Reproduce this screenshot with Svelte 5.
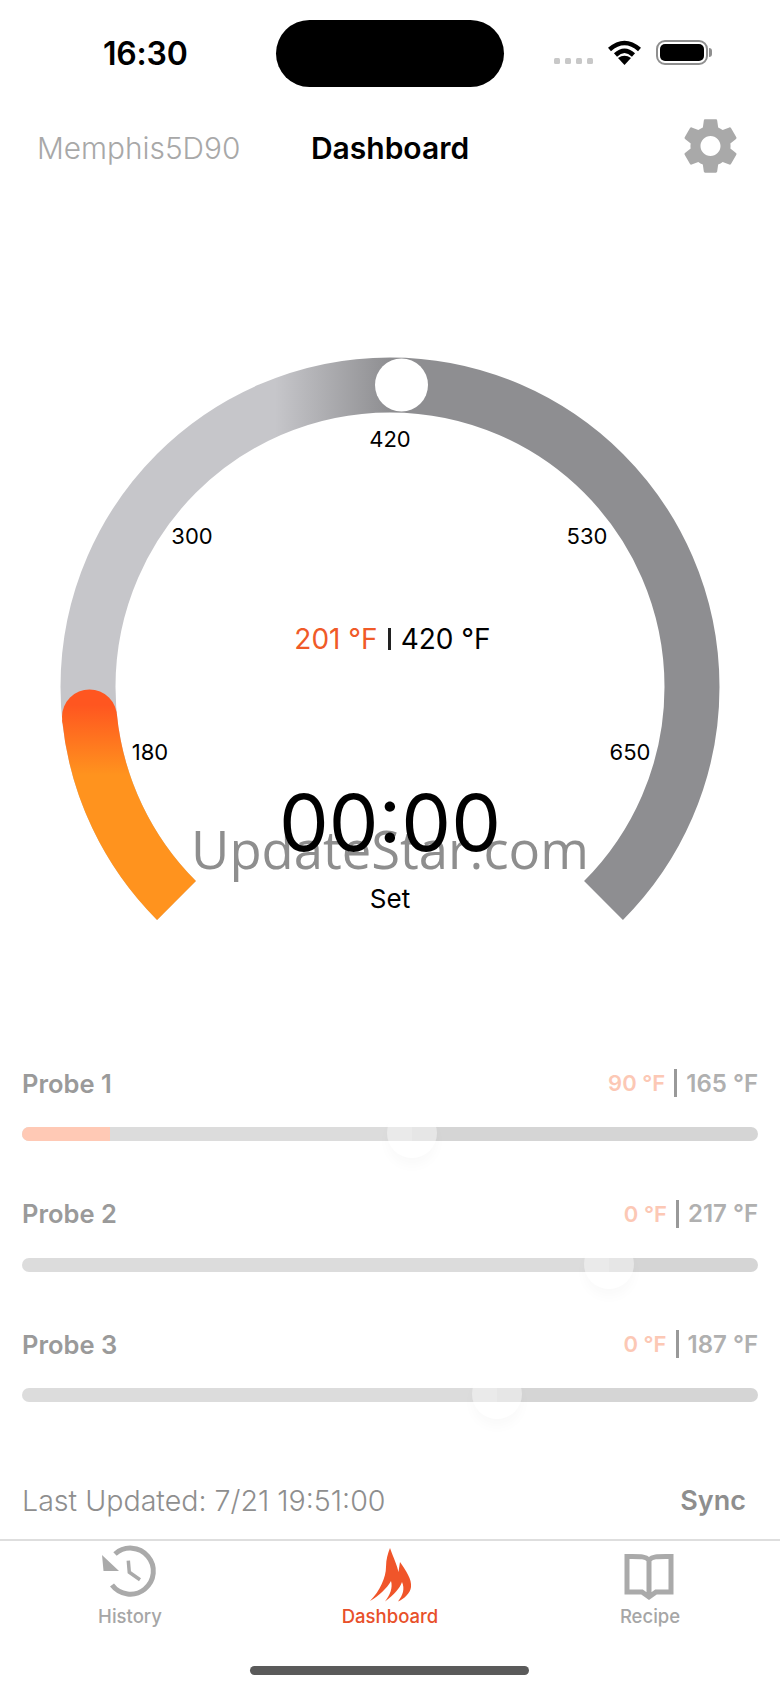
<script>
  const marks = [
    { label: "180", x: 150, y: 412 },
    { label: "300", x: 192, y: 196 },
    { label: "420", x: 390, y: 99 },
    { label: "530", x: 587, y: 196 },
    { label: "650", x: 630, y: 412 }
  ];

  const probes = [
    { name: "Probe 1", temp: 90, target: 165, fill: 12, thumb: 53 },
    { name: "Probe 2", temp: 0, target: 217, fill: 0, thumb: 79.7 },
    { name: "Probe 3", temp: 0, target: 187, fill: 0, thumb: 64.5 }
  ];
</script>

<div class="phone">
  <div class="status">
    <span class="clock">16:30</span>
    <div class="island"></div>
    <div class="indicators">
      <div class="signal"><i></i><i></i><i></i><i></i></div>
      <svg class="wifi" viewBox="0 0 35 25" width="35" height="25">
        <path d="M2.5 9.5Q17.5-3.5 32.5 9.5M8.5 15Q17.5 6.5 26.5 15" fill="none" stroke="#000" stroke-width="4.5" />
        <path d="M11 18Q17.5 13.5 24 18L17.5 25Z" fill="#000" />
      </svg>
      <div class="battery"><div class="charge"></div></div>
      <div class="battery-cap"></div>
    </div>
  </div>

  <div class="nav">
    <span class="device">Memphis5D90</span>
    <span class="title">Dashboard</span>
    <svg class="gear" viewBox="2.5 2.3 19 19.4" width="53" height="54">
      <path fill="#a9a9a9" d="M19.14 12.94c.04-.3.06-.61.06-.94 0-.32-.02-.64-.07-.94l2.03-1.58c.18-.14.23-.41.12-.61l-1.92-3.32c-.12-.22-.37-.29-.59-.22l-2.39.96c-.5-.38-1.03-.7-1.62-.94l-.36-2.54c-.04-.24-.24-.41-.48-.41h-3.84c-.24 0-.43.17-.47.41l-.36 2.54c-.59.24-1.13.57-1.62.94l-2.39-.96c-.22-.08-.47 0-.59.22L2.74 8.87c-.12.21-.08.47.12.61l2.03 1.58c-.05.3-.09.63-.09.94s.02.64.07.94l-2.03 1.58c-.18.14-.23.41-.12.61l1.92 3.32c.12.22.37.29.59.22l2.39-.96c.5.38 1.03.7 1.62.94l.36 2.54c.05.24.24.41.48.41h3.84c.24 0 .44-.17.47-.41l.36-2.54c.59-.24 1.13-.56 1.62-.94l2.39.96c.22.08.47 0 .59-.22l1.92-3.32c.12-.22.07-.47-.12-.61l-2.01-1.58zM12 15.6c-1.98 0-3.6-1.62-3.6-3.6s1.62-3.6 3.6-3.6 3.6 1.62 3.6 3.6-1.62 3.6-3.6 3.6z" />
    </svg>
  </div>

  <div class="gauge">
    <svg class="dial" viewBox="0 0 780 600" width="780" height="600">
      <defs>
        <linearGradient id="track" gradientUnits="userSpaceOnUse" x1="275" y1="0" x2="390" y2="0">
          <stop offset="0" stop-color="#c6c6ca" />
          <stop offset="1" stop-color="#8e8e91" />
        </linearGradient>
        <linearGradient id="heat" gradientUnits="userSpaceOnUse" x1="0" y1="365" x2="0" y2="435">
          <stop offset="0" stop-color="#ff5620" />
          <stop offset="1" stop-color="#ff931e" />
        </linearGradient>
      </defs>
      <path d="M176.5 560.5A302 302 0 1 1 603.5 560.5" fill="none" stroke="url(#track)" stroke-width="55" />
      <path d="M176.5 560.5A302 302 0 0 1 89.5 377" fill="none" stroke="url(#heat)" stroke-width="55" />
      <circle cx="89.5" cy="377" r="27.5" fill="url(#heat)" />
      <circle cx="401.5" cy="45" r="26.5" fill="#fff" />
    </svg>

    {#each marks as mark}
      <span class="mark" style="left: {mark.x}px; top: {mark.y}px">{mark.label}</span>
    {/each}

    <div class="readout">
      <span class="current">201 °F</span>
      <i class="divider"></i>
      <span>420 °F</span>
    </div>
    <div class="watermark">UpdateStar.com</div>
    <div class="timer">00:00</div>
    <div class="set">Set</div>
  </div>

  <div class="probes">
    {#each probes as probe}
      <div class="probe">
        <div class="probe-head">
          <span class="probe-name">{probe.name}</span>
          <div class="probe-values">
            <span class="probe-temp">{probe.temp} °F</span>
            <i class="probe-sep"></i>
            <span class="probe-target">{probe.target} °F</span>
          </div>
        </div>
        <div class="bar" style="--thumb: {probe.thumb}%">
          <div class="bar-fill" style="width: {probe.fill}%"></div>
          <div class="bar-thumb" style="left: {probe.thumb}%"></div>
        </div>
      </div>
    {/each}
  </div>

  <div class="updated">
    <span class="stamp">Last Updated: 7/21 19:51:00</span>
    <span class="sync">Sync</span>
  </div>

  <div class="tabs">
    <div class="tab">
      <svg viewBox="0 0 80 62" width="80" height="62">
        <path d="M25 13A23 23 0 1 1 22 44" fill="none" stroke="#aaa" stroke-width="5" />
        <path d="M12 14L29 30L13.5 30Z" fill="#aaa" />
        <path d="M38.3 19.7L39.3 31.3L50 38.7" fill="none" stroke="#aaa" stroke-width="3.5" />
      </svg>
      <span>History</span>
    </div>
    <div class="tab active">
      <svg viewBox="0 0 80 62" width="80" height="62">
        <path fill="#f0552a" d="M40 7C44 18 47 24 48.5 31C49 27 49.5 24 50 21C56 30 62 38 61 46C60.5 52 54 58 48 60.5C53 54 55 48 52 41C50 47 44 54 35 60.5C40 54 43 47 41 40C37 47 29 55 20 60C30 50 36 36 36 26C36 18 38 12 40 7Z" />
      </svg>
      <span>Dashboard</span>
    </div>
    <div class="tab">
      <svg viewBox="0 0 80 62" width="80" height="62">
        <path d="M39 19C35 15 30 15.5 17 15.5L17 51L32 51L39 56L46 51L61 51L61 15.5C48 15.5 43 15 39 19ZM39 19L39 54" fill="none" stroke="#aaa" stroke-width="5" />
      </svg>
      <span>Recipe</span>
    </div>
  </div>

  <div class="home"></div>
</div>

<style>
  :global(body) {
    background: #fff;
  }

  .phone {
    width: 780px;
    height: 1691px;
    overflow: hidden;
    font-family: Inter, "Liberation Sans", sans-serif;
    color: #000;
  }

  .status {
    height: 100px;
    display: grid;
    grid-template-columns: 276px 228px 1fr;
    align-items: start;
  }

  .clock {
    padding: 35px 0 0 103px;
    font-size: 32px;
    line-height: 38px;
    font-weight: 600;
    letter-spacing: -0.2px;
  }

  .island {
    margin-top: 20px;
    height: 67px;
    border-radius: 34px;
    background: #000;
  }

  .indicators {
    display: flex;
    align-items: flex-start;
    padding: 40px 0 0 50px;
  }

  .signal {
    display: flex;
    gap: 5px;
    margin-top: 18px;
  }

  .signal i {
    width: 6px;
    height: 6px;
    border-radius: 1.5px;
    background: #c8c8c8;
  }

  .wifi {
    margin-left: 14px;
  }

  .battery {
    box-sizing: border-box;
    width: 52px;
    height: 25px;
    margin-left: 14px;
    padding: 2px;
    border: 2px solid #8f8f8f;
    border-radius: 9px;
  }

  .charge {
    height: 100%;
    border-radius: 5px;
    background: #000;
  }

  .battery-cap {
    width: 3px;
    height: 9px;
    margin: 8px 0 0 1px;
    border-radius: 0 3px 3px 0;
    background: #8f8f8f;
  }

  .nav {
    height: 96px;
    display: grid;
    grid-template-columns: 1fr auto 1fr;
    align-items: center;
    padding: 0 43px 0 37px;
  }

  .device {
    font-size: 29.8px;
    font-weight: 300;
    color: #a8a8a8;
    white-space: nowrap;
  }

  .title {
    margin-left: 6px;
    font-size: 30px;
    font-weight: 600;
  }

  .gear {
    justify-self: end;
    margin-top: -4px;
  }

  .gauge {
    position: relative;
    height: 600px;
    margin-top: 144px;
  }

  .dial {
    position: absolute;
    inset: 0;
  }

  .mark {
    position: absolute;
    transform: translate(-50%, -50%);
    font-size: 22px;
    line-height: 24px;
  }

  .readout {
    position: absolute;
    top: 282px;
    left: 0;
    right: 0;
    padding-left: 5px;
    display: flex;
    justify-content: center;
    align-items: center;
    gap: 10px;
    font-size: 28px;
    line-height: 34px;
  }

  .current {
    color: #f05a28;
  }

  .divider {
    width: 3px;
    height: 22px;
    background: #222;
  }

  .watermark {
    position: absolute;
    top: 474px;
    left: 0;
    right: 0;
    text-align: center;
    font-family: "Open Sans", sans-serif;
    font-size: 52.6px;
    line-height: 70px;
    color: #8e8e8e;
  }

  .timer {
    position: absolute;
    top: 432px;
    left: 0;
    right: 0;
    text-align: center;
    font-size: 79px;
    line-height: 100px;
    font-weight: 400;
  }

  .set {
    position: absolute;
    top: 544px;
    left: 0;
    right: 0;
    text-align: center;
    font-size: 26px;
    line-height: 30px;
  }

  .probes {
    margin-top: 122px;
    padding: 0 22px;
    display: flex;
    flex-direction: column;
    gap: 51.5px;
  }

  .probe-head {
    height: 42px;
    margin-bottom: 23px;
    display: flex;
    justify-content: space-between;
    align-items: center;
  }

  .probe-name {
    font-size: 25.5px;
    font-weight: 600;
    color: #9a9a9a;
  }

  .probe-values {
    display: flex;
    align-items: center;
    gap: 9px;
    font-weight: 600;
  }

  .probe-temp {
    font-size: 22px;
    color: #fcc8b5;
  }

  .probe-sep {
    width: 3px;
    height: 28px;
    background: #999;
  }

  .probe-target {
    font-size: 24px;
    color: #b0b0b0;
  }

  .bar {
    position: relative;
    height: 14px;
    border-radius: 7px;
    background: linear-gradient(to right, #dcdcdc var(--thumb), #d5d5d5 var(--thumb));
  }

  .bar-fill {
    height: 100%;
    border-radius: 7px 0 0 7px;
    background: #ffc9b5;
  }

  .bar-thumb {
    position: absolute;
    top: -19px;
    width: 50px;
    height: 50px;
    margin-left: -25px;
    border-radius: 50%;
    background: rgba(255, 255, 255, 0.4);
    box-shadow: 0 8px 12px rgba(0, 0, 0, 0.025);
  }

  .updated {
    margin-top: 78px;
    height: 40px;
    padding: 0 34px 0 22px;
    display: flex;
    justify-content: space-between;
    align-items: center;
    color: #8e8e8e;
  }

  .stamp {
    font-size: 28.6px;
    font-weight: 300;
  }

  .sync {
    font-size: 27px;
    font-weight: 600;
  }

  .tabs {
    margin-top: 19px;
    border-top: 2px solid #dedede;
    display: grid;
    grid-template-columns: repeat(3, 1fr);
  }

  .tab {
    display: flex;
    flex-direction: column;
    align-items: center;
    font-size: 18.5px;
    line-height: 24px;
    font-weight: 500;
    color: #a6a6a6;
  }

  .tab svg {
    display: block;
    margin-bottom: 1px;
  }

  .tab.active {
    color: #e8502a;
  }

  .home {
    width: 279px;
    height: 9px;
    margin: 38px 0 0 250px;
    border-radius: 5px;
    background: #5a5a5a;
  }
</style>
